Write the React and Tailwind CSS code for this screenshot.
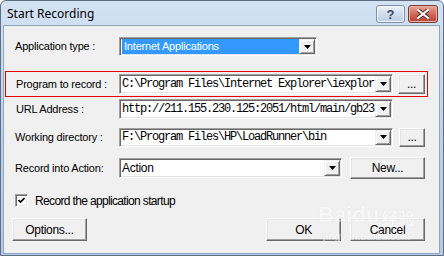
import React from "react"

const sans = { fontFamily: '"Liberation Sans", Arial, sans-serif' }
const mono = { fontFamily: '"Liberation Mono", "Courier New", monospace' }

const Arrow = () => (
  <div className="flex h-full w-[16px] shrink-0 items-center justify-center border border-t-[#f0f0f0] border-l-[#f0f0f0] border-r-[#696969] border-b-[#696969] bg-[#f0f0f0] shadow-[inset_1px_1px_0_#ffffff,inset_-1px_-1px_0_#a0a0a0]">
    <svg width="7" height="4" viewBox="0 0 7 4">
      <path d="M0 0h7L3.5 4z" fill="#000" />
    </svg>
  </div>
)

const Combo = ({ className, children }) => (
  <div
    className={`flex shrink-0 border border-t-[#a0a0a0] border-l-[#a0a0a0] border-r-white border-b-white bg-white p-[1px] shadow-[inset_1px_1px_0_#696969,inset_-1px_-1px_0_#e3e3e3] ${className}`}
  >
    <div className="flex min-w-0 flex-1 items-center overflow-hidden whitespace-nowrap pl-[1px]">
      {children}
    </div>
    <Arrow />
  </div>
)

const Button = ({ className, children }) => (
  <div
    className={`flex shrink-0 items-center justify-center border border-t-white border-l-white border-r-[#696969] border-b-[#696969] bg-[#f0f0f0] text-[12px] tracking-[-0.3px] text-black shadow-[inset_-1px_-1px_0_#a0a0a0,inset_1px_1px_0_#e3e3e3] ${className}`}
    style={sans}
  >
    {children}
  </div>
)

const Path = ({ children }) => (
  <span className="text-[12px] tracking-[-1.2px] text-black" style={mono}>
    {children}
  </span>
)

const Label = ({ className, children }) => (
  <div
    className={`shrink-0 text-[11px] tracking-[-0.2px] text-black ${className}`}
    style={sans}
  >
    {children}
  </div>
)

export default function App() {
  return (
    <div className="flex h-[256px] w-[444px] flex-col overflow-hidden rounded-t-[6px] border border-[#5f6f83] bg-gradient-to-b from-[#d3e2f3] via-[#bed3ea] to-[#b3cbe6]">
      {/* title bar */}
      <div className="flex h-[25px] shrink-0 items-start">
        <div
          className="pl-[6px] pt-[4px] text-[12px] text-black"
          style={{ fontFamily: '"Noto Sans", "Liberation Sans", sans-serif' }}
        >
          Start Recording
        </div>
        <div className="ml-auto flex gap-[3px] pr-[5px] pt-[4px]">
          <div className="flex h-[18px] w-[29px] items-center justify-center rounded-[3px] border border-[#7d90a8] bg-gradient-to-b from-[#edf3fa] via-[#cfdcec] to-[#bccfe5] shadow-[inset_0_0_0_1px_#f3f7fc]">
            <span className="text-[13px] font-bold leading-none text-[#3a4a5e]" style={sans}>
              ?
            </span>
          </div>
          <div className="flex h-[18px] w-[30px] items-center justify-center rounded-[3px] border border-[#7a3b32] bg-gradient-to-b from-[#e8a497] via-[#d06b5a] to-[#b8402f] shadow-[inset_0_0_0_1px_#eab3a8]">
            <svg width="12" height="10" viewBox="0 0 12 10">
              <path
                d="M1 1L11 9M11 1L1 9"
                stroke="#4a2a26"
                strokeWidth="4"
                strokeLinecap="square"
              />
              <path
                d="M1 1L11 9M11 1L1 9"
                stroke="#ffffff"
                strokeWidth="2.2"
                strokeLinecap="square"
              />
            </svg>
          </div>
        </div>
      </div>

      {/* client area */}
      <div className="mb-[2px] ml-[3px] mr-[4px] flex flex-1 flex-col bg-[#f0f0f0] shadow-[0_0_0_1px_#8ea4bf]">
        {/* application type */}
        <div className="mt-[11px] flex h-[19px] items-center pl-[11px]">
          <Label className="w-[104px]">Application type :</Label>
          <Combo className="h-[19px] w-[198px]">
            <div className="flex h-full flex-1 items-center bg-[#3399ff] pl-[2px]">
              <span className="text-[11px] tracking-[-0.2px] text-white" style={sans}>
                Internet Applications
              </span>
            </div>
          </Combo>
        </div>

        {/* program to record */}
        <div className="ml-[1px] mt-[15px] flex h-[26px] w-[423px] items-center border border-[#e00000] pl-[10px]">
          <Label className="w-[103px]">Program to record :</Label>
          <Combo className="h-[20px] w-[274px]">
            <Path>C:\Program Files\Internet Explorer\iexplor</Path>
          </Combo>
          <Button className="ml-[5px] h-[20px] w-[27px]">...</Button>
        </div>

        {/* url */}
        <div className="mt-[2px] flex h-[20px] items-center pl-[12px]">
          <Label className="w-[103px]">URL Address :</Label>
          <Combo className="h-[20px] w-[274px]">
            <Path>http://211.155.230.125:2051/html/main/gb23</Path>
          </Combo>
        </div>

        {/* working directory */}
        <div className="mt-[8px] flex h-[20px] items-center pl-[11px]">
          <Label className="w-[104px]">Working directory :</Label>
          <Combo className="h-[19px] w-[274px]">
            <Path>F:\Program Files\HP\LoadRunner\bin</Path>
          </Combo>
          <Button className="ml-[6px] h-[19px] w-[26px]">...</Button>
        </div>

        {/* record into action */}
        <div className="mt-[10px] flex h-[22px] items-center pl-[11px]">
          <Label className="w-[104px]">Record into Action:</Label>
          <Combo className="h-[20px] w-[223px]">
            <span className="text-[12px] tracking-[-0.3px] text-black" style={sans}>
              Action
            </span>
          </Combo>
          <Button className="ml-[8px] h-[22px] w-[75px]">New...</Button>
        </div>

        {/* checkbox */}
        <div className="mt-[15px] flex h-[13px] items-center pl-[11px]">
          <div className="flex h-[13px] w-[13px] items-center justify-center border border-t-[#a0a0a0] border-l-[#a0a0a0] border-r-white border-b-white bg-white shadow-[inset_1px_1px_0_#696969,inset_-1px_-1px_0_#e3e3e3]">
            <svg width="7" height="7" viewBox="0 0 7 7">
              <path d="M0.5 3L2.5 5L6.5 1" stroke="#000" strokeWidth="1.6" fill="none" />
            </svg>
          </div>
          <span className="ml-[7px] text-[12px] tracking-[-0.65px] text-black" style={sans}>
            Record the application startup
          </span>
        </div>

        {/* bottom buttons */}
        <div className="relative mt-[11px] flex h-[23px] items-center pl-[8px] pr-[14px]">
          <Button className="h-[23px] w-[75px]">Options...</Button>
          <Button className="ml-auto h-[23px] w-[75px]">OK</Button>
          <Button className="ml-[9px] h-[23px] w-[75px]">Cancel</Button>

          {/* watermark */}
          <div className="pointer-events-none absolute left-[314px] top-[-14px] flex flex-col items-center opacity-50">
            <div className="flex items-end leading-none">
              <span className="text-[22px] font-bold text-white [text-shadow:0_0_1px_#c8c8c8]" style={sans}>
                Baidu
              </span>
              <span
                className="ml-[2px] text-[17px] font-bold text-white [text-shadow:0_0_1px_#c8c8c8]"
                style={{ fontFamily: '"Noto Sans CJK SC", sans-serif' }}
              >
                经验
              </span>
            </div>
            <span className="mt-[3px] text-[10px] font-bold text-white [text-shadow:0_0_1px_#c8c8c8]" style={sans}>
              jingyan.baidu.com
            </span>
          </div>
        </div>
      </div>
    </div>
  )
}
